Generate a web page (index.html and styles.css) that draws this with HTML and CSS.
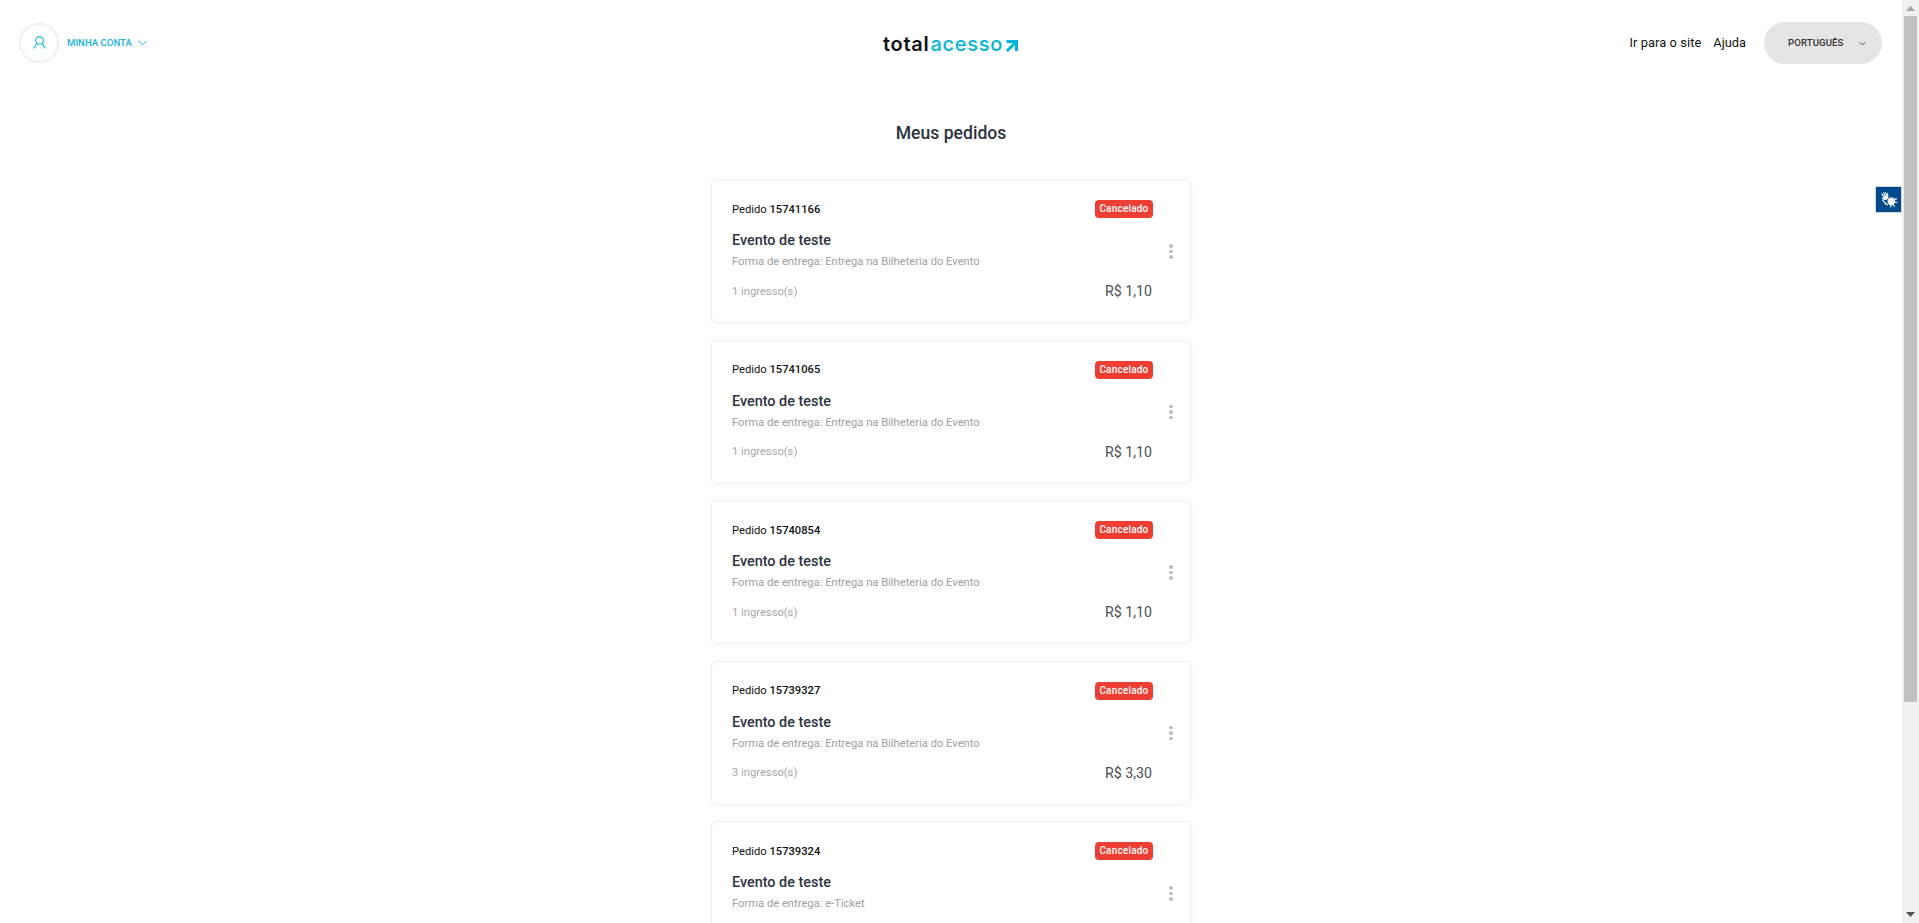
FILE: index.html
```html
<!DOCTYPE html>
<html lang="pt-BR">
<head>
<meta charset="utf-8">
<title>Meus pedidos</title>
<link rel="stylesheet" href="styles.css">
</head>
<body>
<div class="page">
  <header class="topbar">
    <div class="account">
      <span class="avatar">
        <svg width="13" height="13" viewBox="0 0 13 13" fill="none" stroke="#13b5d6" stroke-width="1.1"><circle cx="6.500" cy="4.400" r="3.800"/><path d="M3.800 7.200 C3.200 9.500 1.800 11 .6 12.500M9.200 7.200c.6 2.300 2 3.800 3.200 5.300"/></svg>
      </span>
      <span class="account-label">MINHA CONTA</span>
      <svg class="account-chevron" width="9" height="6" viewBox="0 0 9 6" fill="none" stroke="#13b5d6" stroke-width="1"><path d="M.5 1 4.500 5l4-4"/></svg>
    </div>
    <a class="logo"><span class="logo-dark">total</span><span class="logo-blue">acesso</span><svg class="logo-arrow" width="13" height="12" viewBox="0 0 13 12" fill="none" stroke="#00b5d8" stroke-width="3"><path d="M1.500 1.500H11.500V11M11 2 2 11"/></svg></a>
    <nav class="nav">
      <a class="nav-link">Ir para o site</a>
      <a class="nav-link">Ajuda</a>
      <div class="lang">
        <span class="lang-label">PORTUGUÊS</span>
        <svg width="7" height="5" viewBox="0 0 7 5" fill="none" stroke="#555" stroke-width="1"><path d="M.5 1 3.500 4l3-3"/></svg>
      </div>
    </nav>
  </header>
  <main class="content">
    <h1 class="title">Meus pedidos</h1>
    <article class="card">
      <div class="card-row"><span class="order">Pedido <b>15741166</b></span><span class="badge">Cancelado</span></div>
      <h2 class="event">Evento de teste</h2>
      <p class="delivery">Forma de entrega: Entrega na Bilheteria do Evento</p>
      <div class="card-row bottom"><span class="qty">1 ingresso(s)</span><span class="price">R$ 1,10</span></div>
      <span class="dots"><i></i><i></i><i></i></span>
    </article>
    <article class="card">
      <div class="card-row"><span class="order">Pedido <b>15741065</b></span><span class="badge">Cancelado</span></div>
      <h2 class="event">Evento de teste</h2>
      <p class="delivery">Forma de entrega: Entrega na Bilheteria do Evento</p>
      <div class="card-row bottom"><span class="qty">1 ingresso(s)</span><span class="price">R$ 1,10</span></div>
      <span class="dots"><i></i><i></i><i></i></span>
    </article>
    <article class="card">
      <div class="card-row"><span class="order">Pedido <b>15740854</b></span><span class="badge">Cancelado</span></div>
      <h2 class="event">Evento de teste</h2>
      <p class="delivery">Forma de entrega: Entrega na Bilheteria do Evento</p>
      <div class="card-row bottom"><span class="qty">1 ingresso(s)</span><span class="price">R$ 1,10</span></div>
      <span class="dots"><i></i><i></i><i></i></span>
    </article>
    <article class="card">
      <div class="card-row"><span class="order">Pedido <b>15739327</b></span><span class="badge">Cancelado</span></div>
      <h2 class="event">Evento de teste</h2>
      <p class="delivery">Forma de entrega: Entrega na Bilheteria do Evento</p>
      <div class="card-row bottom"><span class="qty">3 ingresso(s)</span><span class="price">R$ 3,30</span></div>
      <span class="dots"><i></i><i></i><i></i></span>
    </article>
    <article class="card">
      <div class="card-row"><span class="order">Pedido <b>15739324</b></span><span class="badge">Cancelado</span></div>
      <h2 class="event">Evento de teste</h2>
      <p class="delivery">Forma de entrega: e-Ticket</p>
      <span class="dots"><i></i><i></i><i></i></span>
    </article>
  </main>
</div>
<div class="vlibras">
  <svg width="18" height="18" viewBox="0 0 18 18" fill="none" stroke="#fff" stroke-linecap="round">
    <path stroke-width="1.100" d="M5.500 8 1.800 3.200M6 7 3.600 1.800M7 6.800 5.600 1.500M8 7 7.500 2.500"/>
    <path stroke-width="2.600" d="M3.500 7.500 6.500 7.500"/>
    <path stroke-width="1.300" d="M2.800 9.500c1 .3 1.500 1.500 2.500 3 .6.800 1.500 1 2.500 1"/>
    <circle cx="11.300" cy="10.300" r="4.200" fill="#fff" stroke="#004a8d" stroke-width=".8"/>
    <path stroke-width="1.200" d="M14 8.500l2.600-.6M14.500 11l2.300.5M13 13.500l1.500 2M10.500 14l.3 2"/>
  </svg>
</div>
<div class="scrollbar">
  <svg class="arrow-up" width="9" height="5" viewBox="0 0 9 5" fill="#a3a3a3"><path d="M4.500 0 9 5H0z"/></svg>
  <span class="thumb"></span>
  <svg class="arrow-down" width="9" height="5" viewBox="0 0 9 5" fill="#505050"><path d="M0 0h9L4.500 5z"/></svg>
</div>
</body>
</html>
```
FILE: styles.css
```css
* { box-sizing: border-box; }
html, body { margin: 0; height: 923px; overflow: hidden; background: #fff; }
body { font-family: Roboto, "Liberation Sans", sans-serif; color: #212529; }
.page { width: 1902px; height: 923px; overflow: hidden; }
.topbar { display: grid; grid-template-columns: 1fr auto 1fr; align-items: center; height: 86px; padding: 0 20px 0 19px; }
.account { display: flex; align-items: center; margin-top: -1px; }
.avatar { width: 40px; height: 40px; border: 2px solid #f0f0f0; border-radius: 50%; display: flex; align-items: center; justify-content: center; }
.account-label { margin-left: 8px; font-size: 9.600px; font-weight: 500; color: #13b5d6; }
.account-chevron { margin-left: 6px; }
.logo { display: flex; align-items: center; line-height: 22px; font-family: Inter, "DejaVu Sans", sans-serif; font-size: 20px; letter-spacing: .7px; margin-top: 2px; }
.logo-dark { color: #111; font-weight: 600; }
.logo-blue { color: #00b5d8; font-weight: 500; margin-left: 1px; }
.logo-arrow { margin-left: 2px; margin-top: 3px; }
.nav { display: flex; align-items: center; justify-content: flex-end; }
.nav-link { font-size: 12.800px; letter-spacing: .1px; color: #111; line-height: 16px; margin-right: 12px; }
.nav-link + .nav-link { margin-right: 18px; letter-spacing: 0; }
.lang { width: 118px; height: 42px; border-radius: 21px; background: #e5e5e5; display: flex; align-items: center; justify-content: space-between; padding: 0 16px 0 24px; }
.lang-label { font-size: 9.600px; letter-spacing: .1px; font-weight: 500; color: #333; margin-top: -2px; }
.content { display: flex; flex-direction: column; align-items: center; }
.title { margin: 36px 0 0; height: 57px; font-size: 17.600px; line-height: 22px; font-weight: 500; color: #2c3440; }
.card { position: relative; width: 480px; height: 144px; flex: none; margin-bottom: 16.500px; padding: 20px 37px 0 20px; background: #fff; border-radius: 6px; border: 1px solid #f0f0f0; box-shadow: 0 1px 4px rgba(0,0,0,.03); }
.card-row { display: flex; justify-content: space-between; align-items: center; height: 18px; }
.order { font-size: 11.200px; color: #111; }
.order b { font-weight: 500; }
.badge { height: 18px; line-height: 18px; padding: 0 4.500px; border-radius: 4px; background: #ee3e33; color: #fff; font-size: 10px; font-weight: 500; letter-spacing: .2px; }
.event { margin: 14px 0 0; font-size: 14.400px; line-height: 18px; font-weight: 500; color: #2c3440; }
.delivery { margin: 4px 0 0; font-size: 11.200px; line-height: 16px; color: #a0a0a0; }
.bottom { margin-top: 12px; }
.qty { font-size: 11.200px; color: #a8a8a8; }
.price { font-size: 14.200px; margin-right: 1px; color: #4a4f55; }
.dots { position: absolute; right: 17px; top: 64px; display: flex; flex-direction: column; gap: 2px; }
.dots i { width: 4px; height: 3.500px; border-radius: 50%; background: #bdbdbd; }
.vlibras { position: fixed; left: 1875px; top: 186px; width: 27px; height: 27px; background: #004a8d; border: 1px solid #d8d8d8; display: flex; align-items: center; justify-content: center; }
.scrollbar { position: fixed; right: 0; top: 0; width: 17px; height: 923px; background: #f1f1f1; }
.arrow-up { position: absolute; left: 4px; top: 6px; }
.arrow-down { position: absolute; left: 4px; bottom: 6px; }
.thumb { position: absolute; left: 2px; top: 16px; width: 13px; height: 686px; background: #c1c1c1; }
```
